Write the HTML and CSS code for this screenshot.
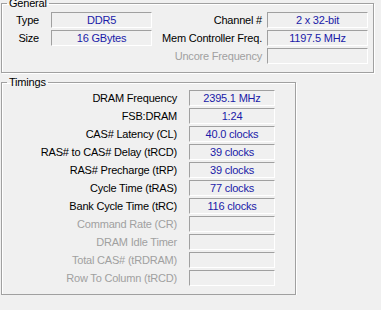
FILE: index.html
```html
<!DOCTYPE html>
<html lang="en">
<head>
  <meta charset="UTF-8">
  <title>Memory</title>
  <link rel="stylesheet" href="styles.css">
</head>
<body>

<div class="tab">
  <fieldset class="group general">
    <legend>General</legend>
    <div class="grid-general">
      <div class="lbl">Type</div>
      <div class="field">DDR5</div>
      <div class="lbl wide">Channel #</div>
      <div class="field">2 x 32-bit</div>

      <div class="lbl">Size</div>
      <div class="field">16 GBytes</div>
      <div class="lbl wide">Mem Controller Freq.</div>
      <div class="field">1197.5 MHz</div>

      <div class="lbl"></div>
      <div></div>
      <div class="lbl wide off">Uncore Frequency</div>
      <div class="field"></div>
    </div>
  </fieldset>

  <fieldset class="group timings">
    <legend>Timings</legend>
    <div class="grid-timings">
      <div class="lbl">DRAM Frequency</div>
      <div class="field">2395.1 MHz</div>
      <div class="lbl">FSB:DRAM</div>
      <div class="field">1:24</div>
      <div class="lbl">CAS# Latency (CL)</div>
      <div class="field">40.0 clocks</div>
      <div class="lbl">RAS# to CAS# Delay (tRCD)</div>
      <div class="field">39 clocks</div>
      <div class="lbl">RAS# Precharge (tRP)</div>
      <div class="field">39 clocks</div>
      <div class="lbl">Cycle Time (tRAS)</div>
      <div class="field">77 clocks</div>
      <div class="lbl">Bank Cycle Time (tRC)</div>
      <div class="field">116 clocks</div>
      <div class="lbl off">Command Rate (CR)</div>
      <div class="field"></div>
      <div class="lbl off">DRAM Idle Timer</div>
      <div class="field"></div>
      <div class="lbl off">Total CAS# (tRDRAM)</div>
      <div class="field"></div>
      <div class="lbl off">Row To Column (tRCD)</div>
      <div class="field"></div>
    </div>
  </fieldset>
</div>

</body>
</html>
```

FILE: styles.css
```css
body {
  margin: 0;
  background-color: #f0f0f0;
  font-family: "Liberation Sans", Arial, sans-serif;
  font-size: 11px;
  letter-spacing: -0.2px;
  color: #000;
}

.tab {
  margin-top: -3px;
  padding-left: 1px;
}

.group {
  margin: 0;
  padding: 0;
  border: 1px solid #a0a0a0;
  box-shadow: inset 1px 1px 0 #fff, 1px 1px 0 #fff;
  box-sizing: border-box;
}

.group legend {
  margin-left: 5px;
  padding: 0 2px;
  line-height: 12px;
  height: 12px;
}

.general {
  width: 373px;
  padding: 3px 0 8px 0;
}

.timings {
  width: 295px;
  margin-top: 3px;
  padding: 2px 0 8px 0;
}

.grid-general {
  display: grid;
  grid-template-columns: 49px 101px 115px 101px;
  grid-auto-rows: 16px;
  row-gap: 2px;
}

.grid-timings {
  display: grid;
  grid-template-columns: 187px 86px;
  grid-auto-rows: 16px;
  row-gap: 2px;
}

.lbl {
  text-align: right;
  padding-right: 12px;
  line-height: 16px;
  white-space: nowrap;
}

.lbl.wide {
  padding-right: 5px;
}

.lbl.off {
  color: #a0a0a0;
}

.field {
  box-sizing: border-box;
  border-top: 1px solid #a0a0a0;
  border-left: 1px solid #a0a0a0;
  border-bottom: 1px solid #fff;
  border-right: 1px solid #fff;
  text-align: center;
  line-height: 14px;
  color: #1a1aa8;
  white-space: nowrap;
}
```
